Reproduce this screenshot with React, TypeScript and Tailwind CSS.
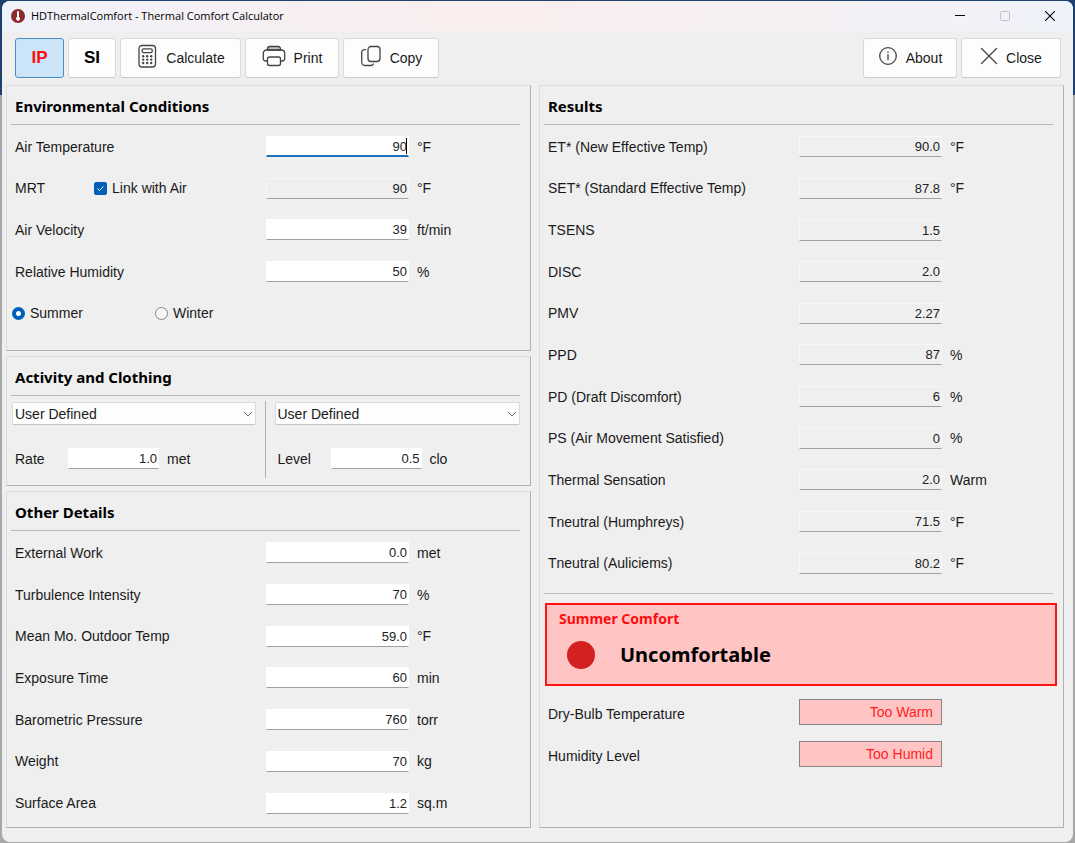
import React from "react";

const uiFont = "font-['Liberation_Sans',Arial,sans-serif]";
const headFont = "font-['Noto_Sans','Open_Sans',sans-serif]";

type Row = { id: string; label: string; value: string; unit?: string };

const otherRows: Row[] = [
  { id: "work", label: "External Work", value: "0.0", unit: "met" },
  { id: "turb", label: "Turbulence Intensity", value: "70", unit: "%" },
  { id: "outdoor", label: "Mean Mo. Outdoor Temp", value: "59.0", unit: "°F" },
  { id: "exposure", label: "Exposure Time", value: "60", unit: "min" },
  { id: "pressure", label: "Barometric Pressure", value: "760", unit: "torr" },
  { id: "weight", label: "Weight", value: "70", unit: "kg" },
  { id: "area", label: "Surface Area", value: "1.2", unit: "sq.m" },
];

const resultRows: Row[] = [
  { id: "et", label: "ET* (New Effective Temp)", value: "90.0", unit: "°F" },
  { id: "set", label: "SET* (Standard Effective Temp)", value: "87.8", unit: "°F" },
  { id: "tsens", label: "TSENS", value: "1.5" },
  { id: "disc", label: "DISC", value: "2.0" },
  { id: "pmv", label: "PMV", value: "2.27" },
  { id: "ppd", label: "PPD", value: "87", unit: "%" },
  { id: "pd", label: "PD (Draft Discomfort)", value: "6", unit: "%" },
  { id: "ps", label: "PS (Air Movement Satisfied)", value: "0", unit: "%" },
  { id: "sensation", label: "Thermal Sensation", value: "2.0", unit: "Warm" },
  { id: "humphreys", label: "Tneutral (Humphreys)", value: "71.5", unit: "°F" },
  { id: "auliciems", label: "Tneutral (Auliciems)", value: "80.2", unit: "°F" },
];

function Panel({ title, className = "", children }: { title: string; className?: string; children: React.ReactNode }) {
  return (
    <section className={`flex flex-col border border-t-[#dcdcdc] border-l-[#dcdcdc] border-r-[#b0b0b0] border-b-[#b0b0b0] pl-1 pr-2.5 ${className}`}>
      <h2 className={`${headFont} mb-px h-[39px] border-b border-[#b8b8b8] pl-1 text-[15px] leading-10 font-bold text-black`}>{title}</h2>
      {children}
    </section>
  );
}

function ValueBox({ id, value, readOnly, focused, width = "w-[143px]" }: { id: string; value: string; readOnly?: boolean; focused?: boolean; width?: string }) {
  const base = "h-[21px] shrink-0 border pr-px text-right text-[13px] text-[#222] outline-none";
  const look = focused
    ? "border-white border-b-2 border-b-[#1f6fc0] bg-white"
    : readOnly
      ? "border-[#f7f7f7] border-b-[#a0a0a0] bg-[#efefef]"
      : "border-white border-b-[#a0a0a0] bg-white";
  return <input id={id} type="text" defaultValue={value} readOnly={readOnly} className={`${base} ${look} ${width}`} />;
}

function Field({ row, readOnly, focused, extra }: { row: Row; readOnly?: boolean; focused?: boolean; extra?: React.ReactNode }) {
  return (
    <div className="flex items-center pl-1">
      <div className="flex w-[251px] shrink-0 items-center">
        <label htmlFor={row.id}>{row.label}</label>
        {extra}
      </div>
      <div className="relative flex shrink-0">
        <ValueBox id={row.id} value={row.value} readOnly={readOnly} focused={focused} />
        {focused && <span className="absolute top-0.5 right-0.5 h-4 w-px bg-black" />}
      </div>
      <span className="pl-2">{row.unit}</span>
    </div>
  );
}

function ToolButton({ label, width, icon }: { label: string; width: string; icon: React.ReactNode }) {
  return (
    <button type="button" className={`flex h-10 items-center justify-center gap-2 rounded-[3px] border border-[#dadada] border-b-[#cacaca] bg-[#fdfdfd] text-[14px] text-[#1a1a1a] ${width}`}>
      {icon}
      <span>{label}</span>
    </button>
  );
}

const iconProps = { fill: "none", stroke: "#444", strokeWidth: 1.3, strokeLinecap: "round" as const, strokeLinejoin: "round" as const };

function CalculatorIcon() {
  return (
    <svg width="22" height="26" viewBox="0 0 22 26" className="-mt-1" {...iconProps}>
      <rect x="3" y="2.500" width="16.500" height="21.500" rx="3" />
      <rect x="6.200" y="5.800" width="10" height="3.800" rx="1.300" />
      <g fill="#444" stroke="none">
        {[13.2, 16.6, 20].map((y) => [7.2, 11.2, 15.2].map((x) => <circle key={`${x}-${y}`} cx={x} cy={y} r="1.2" />))}
      </g>
    </svg>
  );
}

function PrinterIcon() {
  return (
    <svg width="24" height="22" viewBox="0 0 24 22" className="-mt-1" {...iconProps}>
      <path d="M5.5 5V3.8A2.3 2.3 0 0 1 7.8 1.5h8.400a2.300 2.300 0 0 1 2.300 2.300V5z" fill="#c4c4c4" />
      <path d="M5.5 16H3.6A2.3 2.3 0 0 1 1.3 13.700V8.200A3.200 3.200 0 0 1 4.500 5h15a3.200 3.200 0 0 1 3.200 3.200v5.500A2.300 2.300 0 0 1 20.400 16h-1.900" />
      <rect x="5.500" y="12" width="13" height="8.500" rx="2" />
    </svg>
  );
}

function CopyIcon() {
  return (
    <svg width="22" height="22" viewBox="0 0 22 22" className="-mt-1" {...iconProps}>
      <rect x="8" y="1.500" width="12" height="15" rx="3" />
      <path d="M5.500 4.700H4.500A2.800 2.800 0 0 0 1.700 7.500v9.500A3.500 3.500 0 0 0 5.200 20.500h5.600A2.800 2.800 0 0 0 13.400 19" />
    </svg>
  );
}

function InfoIcon() {
  return (
    <svg width="20" height="20" viewBox="0 0 20 20" className="-mt-1" {...iconProps}>
      <circle cx="10" cy="10" r="8.300" />
      <path d="M10 8.700v5" />
      <circle cx="10" cy="6.300" r=".8" fill="#444" stroke="none" />
    </svg>
  );
}

function CloseIcon() {
  return (
    <svg width="18" height="18" viewBox="0 0 18 18" className="-mt-1" {...iconProps}>
      <path d="M1.500 1.500l15 15M16.500 1.500l-15 15" />
    </svg>
  );
}

function Dropdown({ id, label }: { id: string; label: string }) {
  return (
    <div className="relative">
      <select id={id} aria-label={label} className="block h-[23px] w-full appearance-none rounded-[2px] border border-[#dadada] border-b-[#c4c4c4] bg-[#fdfdfd] pl-0.5 text-[14px] leading-5 text-[#1a1a1a] outline-none">
        <option>User Defined</option>
      </select>
      <svg width="10" height="6" viewBox="0 0 10 6" className="pointer-events-none absolute top-[9px] right-[3px]" fill="none" stroke="#777" strokeWidth="1">
        <path d="M1 1l4 4 4-4" />
      </svg>
    </div>
  );
}

function Season({ id, label, checked }: { id: string; label: string; checked?: boolean }) {
  return (
    <div className="flex w-[143px] items-center">
      <input
        id={id}
        type="radio"
        name="season"
        defaultChecked={checked}
        className="size-[13px] appearance-none rounded-full border border-[#858585] bg-[#f5f5f5] checked:border-4 checked:border-[#005fb8] checked:bg-white"
      />
      <label htmlFor={id} className="pl-[5px]">{label}</label>
    </div>
  );
}

function StatusBox({ id, label, value }: { id: string; label: string; value: string }) {
  return (
    <div className="flex items-center pl-1">
      <label htmlFor={id} className="w-[251px] shrink-0 pt-1">{label}</label>
      <output id={id} className="h-[26px] w-[143px] border border-[#8c8484] bg-[#ffc5c5] pr-2 text-right leading-6 text-[#ff1e1e]">{value}</output>
    </div>
  );
}

export default function App() {
  return (
    <div className={`${uiFont} flex min-h-screen flex-col bg-linear-to-b from-[#1d4070] from-[95px] to-[#a8a8a8] to-[95px] px-0.5 pt-px pb-px text-[14px] leading-5 text-[#1a1a1a]`}>
      <main className="flex grow flex-col rounded-lg bg-[#efefef]">
        <header className="flex h-[30px] items-center rounded-t-lg bg-linear-to-r from-[#f0f2fa] via-[#fbeeee] via-45% to-[#f0f3fa] pr-px pl-[9px]">
          <svg width="14" height="14" viewBox="0 0 14 14" aria-hidden="true">
            <circle cx="7" cy="7" r="7" fill="#8a2a2c" />
            <path d="M7 3v6" stroke="#fff" strokeWidth="2" strokeLinecap="round" />
            <circle cx="7" cy="9.800" r="2" fill="#fff" />
          </svg>
          <h1 className="grow pl-1.5 font-['Open_Sans','Noto_Sans',sans-serif] text-[11px] text-black">HDThermalComfort - Thermal Comfort Calculator</h1>
          <button type="button" aria-label="Minimize" className="flex h-7 w-[45px] items-center justify-center">
            <svg width="10" height="10" viewBox="0 0 10 10"><path d="M0 4.500h10" stroke="#000" /></svg>
          </button>
          <button type="button" aria-label="Maximize" disabled className="flex h-7 w-[45px] items-center justify-center">
            <svg width="10" height="10" viewBox="0 0 10 10"><rect x=".5" y=".5" width="9" height="9" rx="1" fill="none" stroke="#bfbfc8" /></svg>
          </button>
          <button type="button" aria-label="Close window" className="flex h-7 w-[45px] items-center justify-center">
            <svg width="10" height="10" viewBox="0 0 10 10"><path d="M0 0l10 10M10 0L0 10" stroke="#000" strokeWidth="1.100" /></svg>
          </button>
        </header>

        <nav className="flex gap-1 py-[7px] pr-3 pl-[13px]">
          <button type="button" className="h-10 w-[49px] rounded-[3px] border border-[#4a8cc6] bg-[#cce4f7] text-[17px] font-bold text-[#ff0d0d]">IP</button>
          <button type="button" className="h-10 w-12 rounded-[3px] border border-[#dadada] border-b-[#cacaca] bg-[#fdfdfd] text-[17px] font-bold text-black">SI</button>
          <ToolButton label="Calculate" width="w-[121px]" icon={<CalculatorIcon />} />
          <ToolButton label="Print" width="w-[94px]" icon={<PrinterIcon />} />
          <ToolButton label="Copy" width="w-24" icon={<CopyIcon />} />
          <div className="grow" />
          <ToolButton label="About" width="w-[94px]" icon={<InfoIcon />} />
          <ToolButton label="Close" width="w-[100px]" icon={<CloseIcon />} />
        </nav>

        <div className="grid grow grid-cols-2 gap-2 pr-[9px] pb-3.5 pl-1">
          <div className="flex flex-col gap-[5px]">
            <Panel title="Environmental Conditions" className="h-[266px]">
              <div className="grid h-[208px] auto-rows-fr">
                <Field row={{ id: "air", label: "Air Temperature", value: "90", unit: "°F" }} focused />
                <Field
                  row={{ id: "mrt", label: "MRT", value: "90", unit: "°F" }}
                  readOnly
                  extra={
                    <span className="flex items-center pl-[49px]">
                      <span className="relative flex">
                        <input id="link" type="checkbox" defaultChecked className="size-[13px] appearance-none rounded-[2px] border border-[#858585] checked:border-[#005fb8] checked:bg-[#005fb8]" />
                        <svg width="13" height="13" viewBox="0 0 13 13" className="pointer-events-none absolute inset-0" fill="none" stroke="#fff">
                          <path d="M3.500 6.500l2 2 4-4" />
                        </svg>
                      </span>
                      <label htmlFor="link" className="pl-[5px]">Link with Air</label>
                    </span>
                  }
                />
                <Field row={{ id: "velocity", label: "Air Velocity", value: "39", unit: "ft/min" }} />
                <Field row={{ id: "humidity", label: "Relative Humidity", value: "50", unit: "%" }} />
                <div className="flex items-center pl-px">
                  <Season id="summer" label="Summer" checked />
                  <Season id="winter" label="Winter" />
                </div>
              </div>
            </Panel>

            <Panel title="Activity and Clothing" className="h-[130px]">
              <div className="grid grid-cols-2 pt-1">
                <div className="flex flex-col border-r border-[#b0b0b0] pb-[9px]">
                  <div className="mt-px mr-[9px] ml-px"><Dropdown id="activity" label="Activity" /></div>
                  <div className="flex items-center pt-[22px] pl-1">
                    <label htmlFor="rate" className="w-[53px] pt-0.5">Rate</label>
                    <ValueBox id="rate" value="1.0" width="w-[91px]" />
                    <span className="pt-0.5 pl-2">met</span>
                  </div>
                </div>
                <div className="flex flex-col pl-[9px]">
                  <div className="mt-px"><Dropdown id="clothing" label="Clothing" /></div>
                  <div className="flex items-center pt-[22px] pl-[3px]">
                    <label htmlFor="level" className="w-[53px] pt-0.5">Level</label>
                    <ValueBox id="level" value="0.5" width="w-[91px]" />
                    <span className="pt-0.5 pl-2">clo</span>
                  </div>
                </div>
              </div>
            </Panel>

            <Panel title="Other Details" className="grow">
              <div className="grid h-[292px] auto-rows-fr">
                {otherRows.map((r) => <Field key={r.id} row={r} />)}
              </div>
            </Panel>
          </div>

          <Panel title="Results">
            <div className="grid h-[458px] auto-rows-fr">
              {resultRows.map((r) => <Field key={r.id} row={r} readOnly />)}
            </div>
            <div className="mt-[9px] border-t border-[#c0c0c0]" />
            <div className="mt-[9px] -mr-1 ml-px h-[83px] border-2 border-[#ff1414] bg-[#ffc5c5] pl-3">
              <h3 className={`${headFont} pt-1 text-[14px] leading-5 font-bold text-[#ff0d0d]`}>Summer Comfort</h3>
              <div className="flex items-center gap-[25px] pt-3 pl-2">
                <span className="size-7 rounded-full bg-[#d32020]" />
                <strong className={`${headFont} text-[20px] leading-7 text-black`}>Uncomfortable</strong>
              </div>
            </div>
            <div className="grid gap-4 pt-[13px]">
              <StatusBox id="drybulb" label="Dry-Bulb Temperature" value="Too Warm" />
              <StatusBox id="humid" label="Humidity Level" value="Too Humid" />
            </div>
          </Panel>
        </div>
      </main>
    </div>
  );
}
